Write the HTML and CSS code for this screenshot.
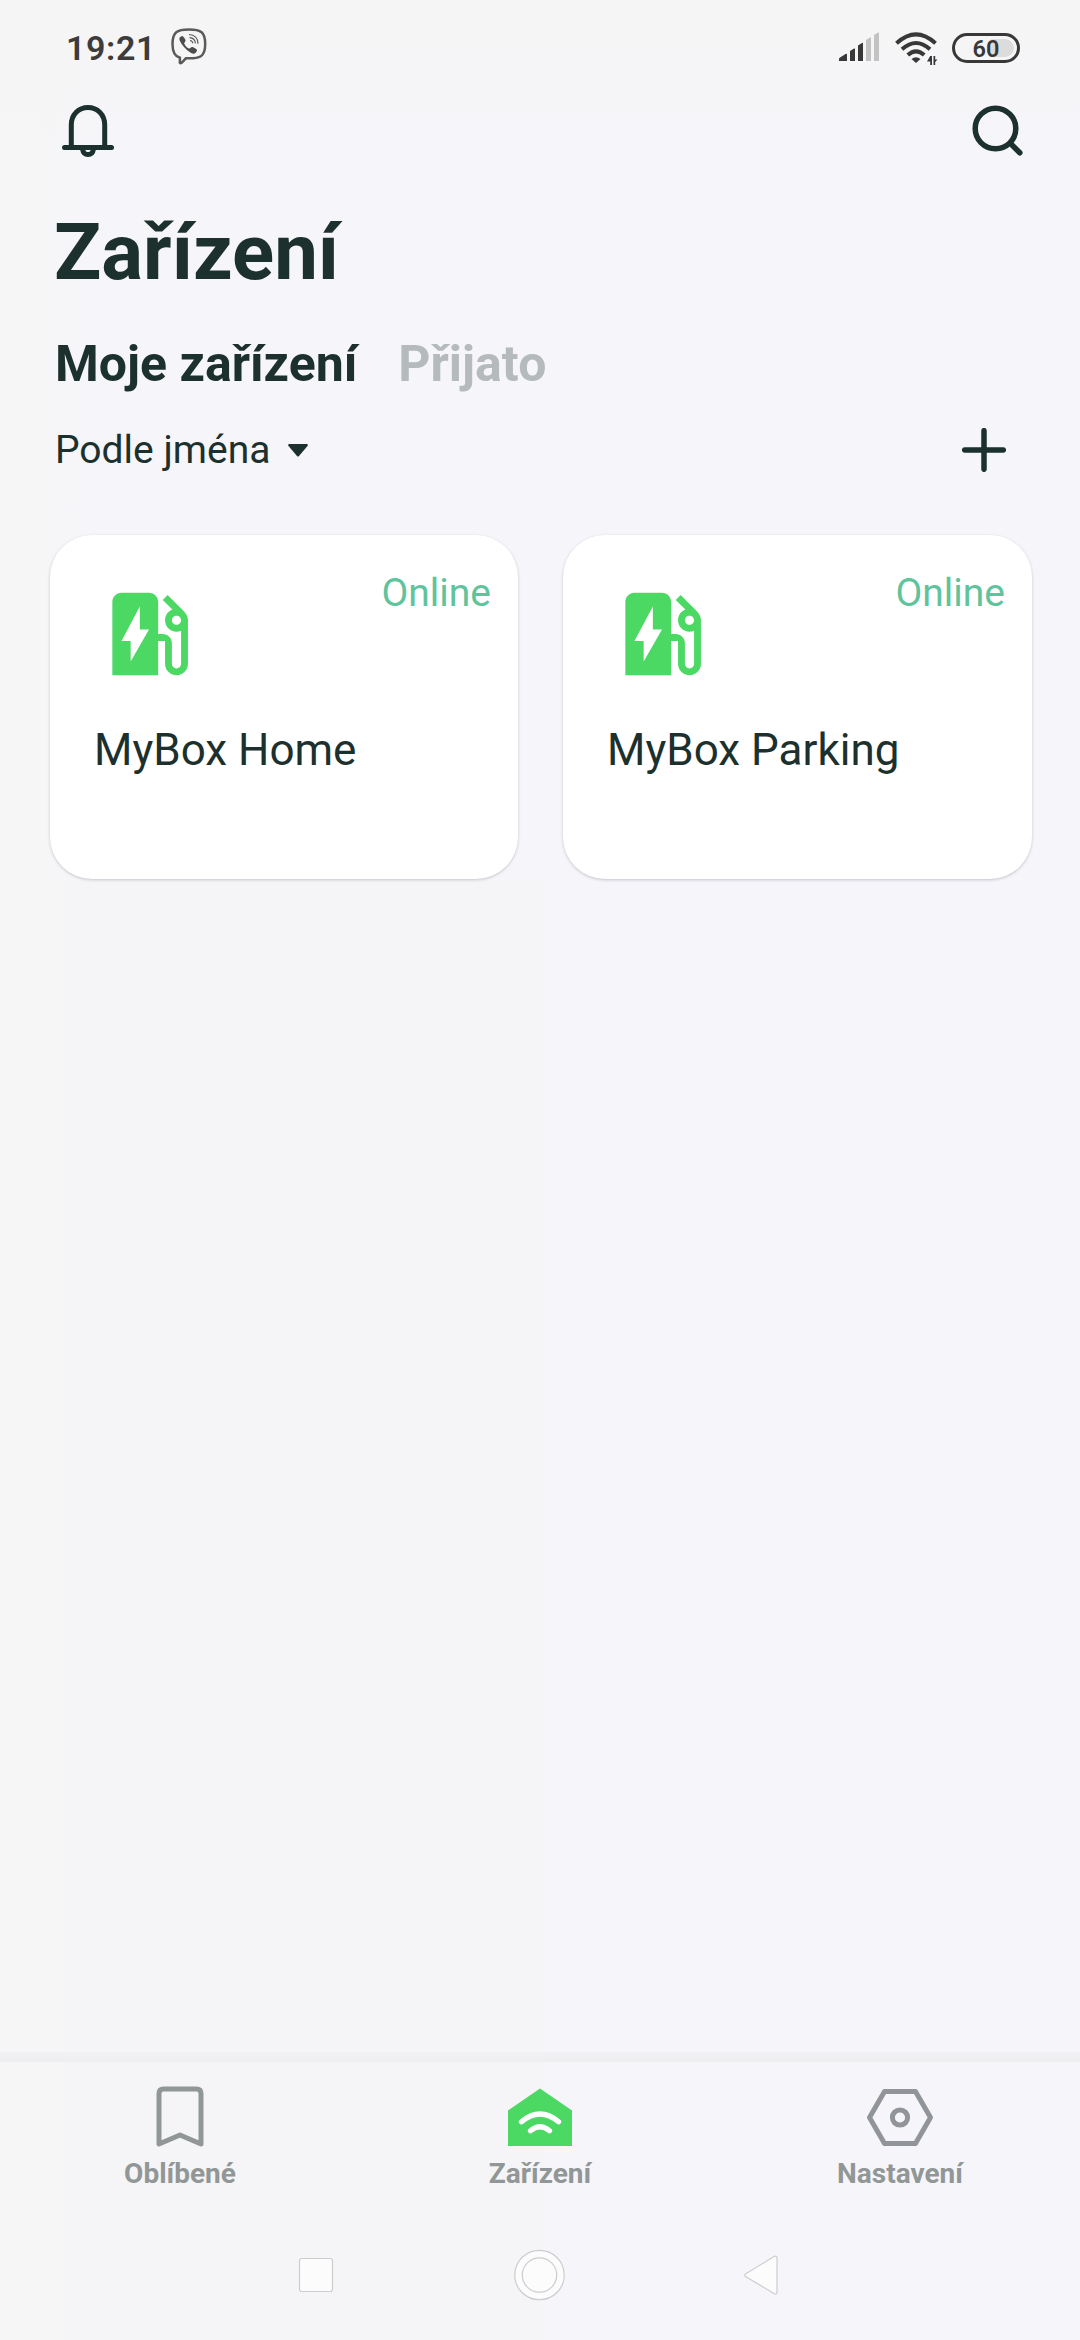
FILE: index.html
```html
<!DOCTYPE html>
<html lang="cs">
<head>
<meta charset="utf-8">
<title>Zařízení</title>
<link rel="stylesheet" href="styles.css">
</head>
<body>
<div class="screen">
  <div class="statusbar">
    <span class="clock">19:21</span>
    <svg class="viber" width="36" height="38" viewBox="0 0 36 38" fill="none" stroke="#5a5a5a">
      <path d="M18 1.500C6 1.500 1.500 4 1.500 16c0 8 2 12.300 7.400 13.800v5q.6 1 1.700 0l4.300-4.500C29 30.800 34.200 29 34.200 16 34.200 4 30 1.500 18 1.500z" stroke-width="2.500"/>
      <path d="M8.800 9.500c1.500-2 3-2 4.200 0 2 2.800 2 3.600.3 5.200-.8 1 3 5.600 4.800 5.800 1.500.2 1.600-2 4-1.200 4.600 2.200 4.800 3 2.600 5.400-1.300 1.400-2.800 1.200-4.600.2C14.500 21.500 10.500 17 8.700 12.500c-.4-1.200-.5-2 .1-3z" fill="#4c4c4c" stroke="none"/>
      <path d="M18 6.500c5.600.3 9 4 9 9.300M18.500 9.700c3.700.3 5.700 2.300 5.900 5.700M19 12.500c1.800.2 2.600 1 2.800 2.700" stroke-width="1.200"/>
    </svg>
    <div class="indicators">
      <svg width="42" height="30" viewBox="0 0 42 30">
        <g fill="#383838"><path d="M0 29v-2q0-1 1-1.600l6-3.600q1-.3 1 .7V29z"/><path d="M11 29V19l4-2.500q1-.3 1 .6V29z"/><path d="M19 29V13.500l4-2.600q1-.3 1 .6V29z"/></g>
        <g fill="#c3c3c3"><path d="M27 29V8l4-2.600q1-.3 1 .6v23z"/><path d="M35 29V3l4-2.500q1-.3 1 .6V29z"/></g>
      </svg>
      <svg width="43" height="34" viewBox="0 0 43 34" fill="none" stroke="#383838">
        <path d="M1.500 11.300q19.500-17.800 39 0" stroke-width="4"/>
        <path d="M7 17.300q14-12.600 28 0" stroke-width="4"/>
        <path d="M12.800 23q8.200-7.400 16.400 0" stroke-width="4"/>
        <path d="M16.500 27q4.500-3.600 9 0L21 31z" fill="#383838" stroke="none"/>
        <path d="M35.200 24h1.800v9h-1.800v-3.500h-3.200zM38.500 33v-9h1.700v3.500h2.300l-2.300 2.500v3z" fill="#383838" stroke="none"/>
      </svg>
      <div class="battery"><span class="level">60</span></div>
    </div>
  </div>

  <header class="toolbar">
    <svg width="52" height="52" viewBox="0 0 52 52" fill="none" stroke="#1c302d" stroke-width="5" stroke-linecap="round">
      <path d="M9.300 41V20C9.300 9.500 16.800 2.500 26 2.500S42.700 9.500 42.700 20v21"/>
      <path d="M2.500 42.500h47"/><path d="M20.500 44c.5 3.500 2.500 5.500 5.500 5.500s5-2 5.500-5.500"/>
    </svg>
    <svg width="52" height="52" viewBox="0 0 52 52" fill="none" stroke="#1c302d" stroke-width="5.500" stroke-linecap="round">
      <circle cx="23.500" cy="23.500" r="20.300"/><path d="M39.500 39.500l8.300 8.300"/>
    </svg>
  </header>

  <h1 class="title">Zařízení</h1>
  <nav class="tabs"><span>Moje zařízení</span><span class="inactive">Přijato</span></nav>
  <div class="sortrow">
    <span class="sort">Podle jména</span>
    <svg class="caret" width="20" height="13" viewBox="0 0 20 13" fill="#1c302d"><path d="M1 0h18q1.500.5.5 2L11 12q-1 1-2 0L.500 2q-1-1.500.5-2z"/></svg>
    <svg class="plus" width="44" height="44" viewBox="0 0 44 44" fill="none" stroke="#1c302d" stroke-width="5.500" stroke-linecap="round"><path d="M22 2.700v38.600M2.700 22h38.600"/></svg>
  </div>

  <main class="cards">
    <article class="card">
      <div class="cardtop">
        <svg class="station" viewBox="0 0 24 24"><path d="M19.770 7.230l.01-.01-3.720-3.720L15 4.560l2.110 2.110c-.94.36-1.610 1.260-1.610 2.330 0 1.380 1.120 2.500 2.500 2.500.36 0 .69-.08 1-.21v7.210c0 .55-.45 1-1 1s-1-.45-1-1V14c0-1.100-.9-2-2-2h-1V5c0-1.100-.9-2-2-2H6c-1.100 0-2 .9-2 2v16h10v-7.500h1.500v5c0 1.380 1.120 2.500 2.500 2.500s2.500-1.120 2.500-2.500V9c0-.69-.28-1.320-.73-1.770zM18 10c-.55 0-1-.45-1-1s.45-1 1-1 1 .45 1 1-.45 1-1 1zM8 18v-4.500H6L10 6v5h2l-4 7z"/></svg>
        <span class="state">Online</span>
      </div>
      <h2 class="name">MyBox Home</h2>
    </article>
    <article class="card">
      <div class="cardtop">
        <svg class="station" viewBox="0 0 24 24"><path d="M19.770 7.230l.01-.01-3.720-3.720L15 4.560l2.110 2.110c-.94.36-1.610 1.260-1.610 2.330 0 1.380 1.120 2.500 2.500 2.500.36 0 .69-.08 1-.21v7.210c0 .55-.45 1-1 1s-1-.45-1-1V14c0-1.100-.9-2-2-2h-1V5c0-1.100-.9-2-2-2H6c-1.100 0-2 .9-2 2v16h10v-7.500h1.500v5c0 1.380 1.120 2.500 2.500 2.500s2.500-1.120 2.500-2.500V9c0-.69-.28-1.320-.73-1.770zM18 10c-.55 0-1-.45-1-1s.45-1 1-1 1 .45 1 1-.45 1-1 1zM8 18v-4.500H6L10 6v5h2l-4 7z"/></svg>
        <span class="state">Online</span>
      </div>
      <h2 class="name">MyBox Parking</h2>
    </article>
  </main>

  <nav class="tabbar">
    <a class="tab">
      <svg width="72" height="64" viewBox="0 0 72 64" fill="none" stroke="#919796" stroke-width="5" stroke-linejoin="round"><path d="M15 60V9.500q0-4.500 4.500-4.500h33q4.500 0 4.500 4.500V60L36 51z"/></svg>
      <span>Oblíbené</span>
    </a>
    <a class="tab">
      <svg width="72" height="64" viewBox="0 0 72 64" fill="none"><path d="M36 4.500L68 26.500V62H4V26.500z" fill="#4bd964"/><path d="M17.500 37.800q18.500-15.500 37 0M26.500 46.800q9.500-8 19 0" stroke="#fff" stroke-width="5.300" stroke-linecap="round"/></svg>
      <span>Zařízení</span>
    </a>
    <a class="tab">
      <svg width="72" height="64" viewBox="0 0 72 64" fill="none" stroke="#919599" stroke-width="5" stroke-linejoin="round"><path d="M5.500 33.500l15-26h31l15 26-15 26h-31z"/><circle cx="36" cy="33.500" r="7.600"/></svg>
      <span>Nastavení</span>
    </a>
  </nav>

  <div class="sysnav">
    <svg width="36" height="52" viewBox="0 0 36 52"><rect x="1.500" y="9.500" width="33" height="33" rx="2.500"/></svg>
    <svg width="52" height="52" viewBox="0 0 52 52"><circle cx="26.500" cy="26" r="24.700"/><circle cx="26.500" cy="26" r="17.200"/></svg>
    <svg width="36" height="52" viewBox="0 0 36 52"><path d="M2.500 25L31 7.500q3-1 3 1.500v34q0 3-3 1.500L2.500 27.500q-1.500-1.200 0-2.500z"/></svg>
  </div>
</div>
</body>
</html>
```
FILE: styles.css
```css
* { box-sizing: border-box; }
body { margin: 0; font-family: Roboto, "Liberation Sans", sans-serif; color: #1c302d; }
svg { display: block; flex: none; }

.screen {
  width: 1080px;
  height: 2340px;
  display: flex;
  flex-direction: column;
  background:
    linear-gradient(#f5f5f5, rgba(245, 245, 245, 0)) 0 0 / 100% 160px no-repeat,
    linear-gradient(90deg, #f6f6f6 63px, #f5f4f7 63px 543px, #f6f5fa 543px) 0 880px no-repeat,
    linear-gradient(90deg, #f6f6f6 20px, #f6f5fa 100px);
}

.statusbar { height: 96px; display: flex; align-items: flex-start; padding: 28px 60px 0 66px; }
.clock { font-size: 34px; line-height: 40px; font-weight: 600; letter-spacing: .600px; color: #3c3c3c; width: 105px; white-space: nowrap; }
.indicators { margin-left: auto; display: flex; gap: 14px; padding-top: 4px; }
.battery {
  width: 68px; height: 30px; margin-top: 1px;
  border: 3px solid #383838; border-radius: 15px;
  background: linear-gradient(90deg, #f5f5f5 36px, #dcdcdc 36px) padding-box;
  box-shadow: inset 0 0 0 3px #f5f5f5;
  display: flex; align-items: center; justify-content: center;
}
.level { padding-top: 2px; font-size: 23.500px; font-weight: 600; line-height: 24px; color: #383838; }

.toolbar { height: 104px; padding: 9px 56px 0 62px; display: flex; justify-content: space-between; }
.title { margin: 0; height: 128px; padding: 7px 0 0 54px; font-size: 78px; line-height: 91px; font-weight: 700; }
.tabs { height: 80px; padding: 6px 0 0 55px; display: flex; gap: 41px; font-size: 50px; line-height: 60px; font-weight: 700; white-space: nowrap; }
.inactive { color: #b5babd; }
.sortrow { height: 127px; padding: 20px 74px 0 55px; display: flex; align-items: flex-start; }
.sort { font-size: 39px; line-height: 44px; white-space: nowrap; }
.caret { margin: 16px 0 0 18px; }
.plus { margin-left: auto; }

.cards { flex: 1; padding: 0 48px 0 50px; display: grid; grid-template-columns: 468px 469px; justify-content: space-between; align-items: start; }
.card { height: 344px; background: #fff; border-radius: 42px; padding: 44px 27px 0 44px; box-shadow: 0 1px 3px rgba(60, 50, 70, .25); }
.cardtop { display: flex; justify-content: space-between; align-items: flex-start; }
.station { width: 110px; height: 110px; fill: #4bd964; }
.state { margin-top: -9px; font-size: 39px; line-height: 46px; color: #5fc49c; }
.name { margin: 35px 0 0; font-size: 44px; line-height: 52px; font-weight: 400; white-space: nowrap; }

.tabbar { height: 148px; display: grid; grid-template-columns: repeat(3, 1fr); padding-top: 32px; background: linear-gradient(#f2f1f4, #eeedf0) 0 0 / 100% 10px no-repeat; }
.tab { display: flex; flex-direction: column; align-items: center; gap: 9px; font-size: 28px; line-height: 34px; font-weight: 700; color: #919796; }
.sysnav { height: 140px; padding: 49px 301px 0 298px; display: flex; justify-content: space-between; fill: #fcfcfd; stroke: #cfccd0; stroke-width: 1.200; }
```
